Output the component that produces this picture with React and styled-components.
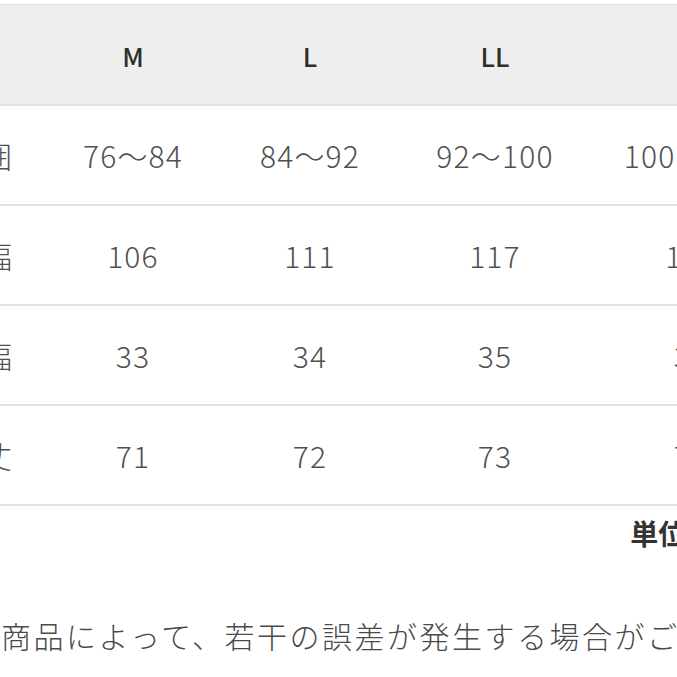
import React from "react";
import styled, { createGlobalStyle } from "styled-components";

const Global = createGlobalStyle`
  html, body { margin: 0; padding: 0; background: #ffffff; }
  body { overflow: hidden; width: 677px; height: 677px; }
  #root { width: 677px; height: 677px; overflow: hidden; }
`;

const Page = styled.div`
  width: 677px;
  height: 677px;
  overflow: hidden;
  padding-top: 4px;
  box-sizing: border-box;
  font-family: "Noto Sans CJK JP", "Noto Sans", sans-serif;
`;

const Table = styled.div`
  margin-left: -81px;
  width: 900px;
  border-top: 1px solid #e4e4e4;
`;

const Row = styled.div`
  display: grid;
  grid-template-columns: 126px 176px 178px 192px 200px;
  height: ${(p) => (p.$head ? "99px" : "98px")};
  align-items: center;
  background: ${(p) => (p.$head ? "#eeeeee" : "#ffffff")};
  border-bottom: 2px solid #e2e2e2;
`;

const Cell = styled.div`
  text-align: center;
  white-space: nowrap;
  font-size: ${(p) => (p.$head ? "26px" : "30px")};
  font-weight: ${(p) => (p.$head ? 500 : 300)};
  color: ${(p) => (p.$head ? "#2e2e2e" : "#505050")};
  letter-spacing: ${(p) => (p.$head ? "0" : "1.2px")};
  padding-top: ${(p) => (p.$head ? "2px" : "0")};
`;

const Unit = styled.div`
  display: flex;
  justify-content: flex-end;
  height: 54px;
  align-items: center;
`;

const UnitText = styled.span`
  font-size: 28px;
  font-weight: 700;
  color: #333333;
  margin-right: -79px;
  white-space: nowrap;
`;

const Note = styled.div`
  margin-top: 53px;
  padding-left: 1px;
  font-size: 30px;
  font-weight: 300;
  color: #4a4a4a;
  white-space: nowrap;
  letter-spacing: 2.5px;
`;

const head = ["", "M", "L", "LL", "3L"];
const rows = [
  ["胸囲", "76～84", "84～92", "92～100", "100～108"],
  ["身幅", "106", "111", "117", "123"],
  ["肩幅", "33", "34", "35", "36"],
  ["着丈", "71", "72", "73", "74"],
];

export default function App() {
  return (
    <>
      <Global />
      <Page>
        <Table>
          <Row $head>
            {head.map((h, i) => (
              <Cell $head key={i}>{h}</Cell>
            ))}
          </Row>
          {rows.map((r, i) => (
            <Row key={i}>
              {r.map((c, j) => (
                <Cell key={j}>{c}</Cell>
              ))}
            </Row>
          ))}
        </Table>
        <Unit>
          <UnitText>単位：cm</UnitText>
        </Unit>
        <Note>商品によって、若干の誤差が発生する場合がございます。</Note>
      </Page>
    </>
  );
}
